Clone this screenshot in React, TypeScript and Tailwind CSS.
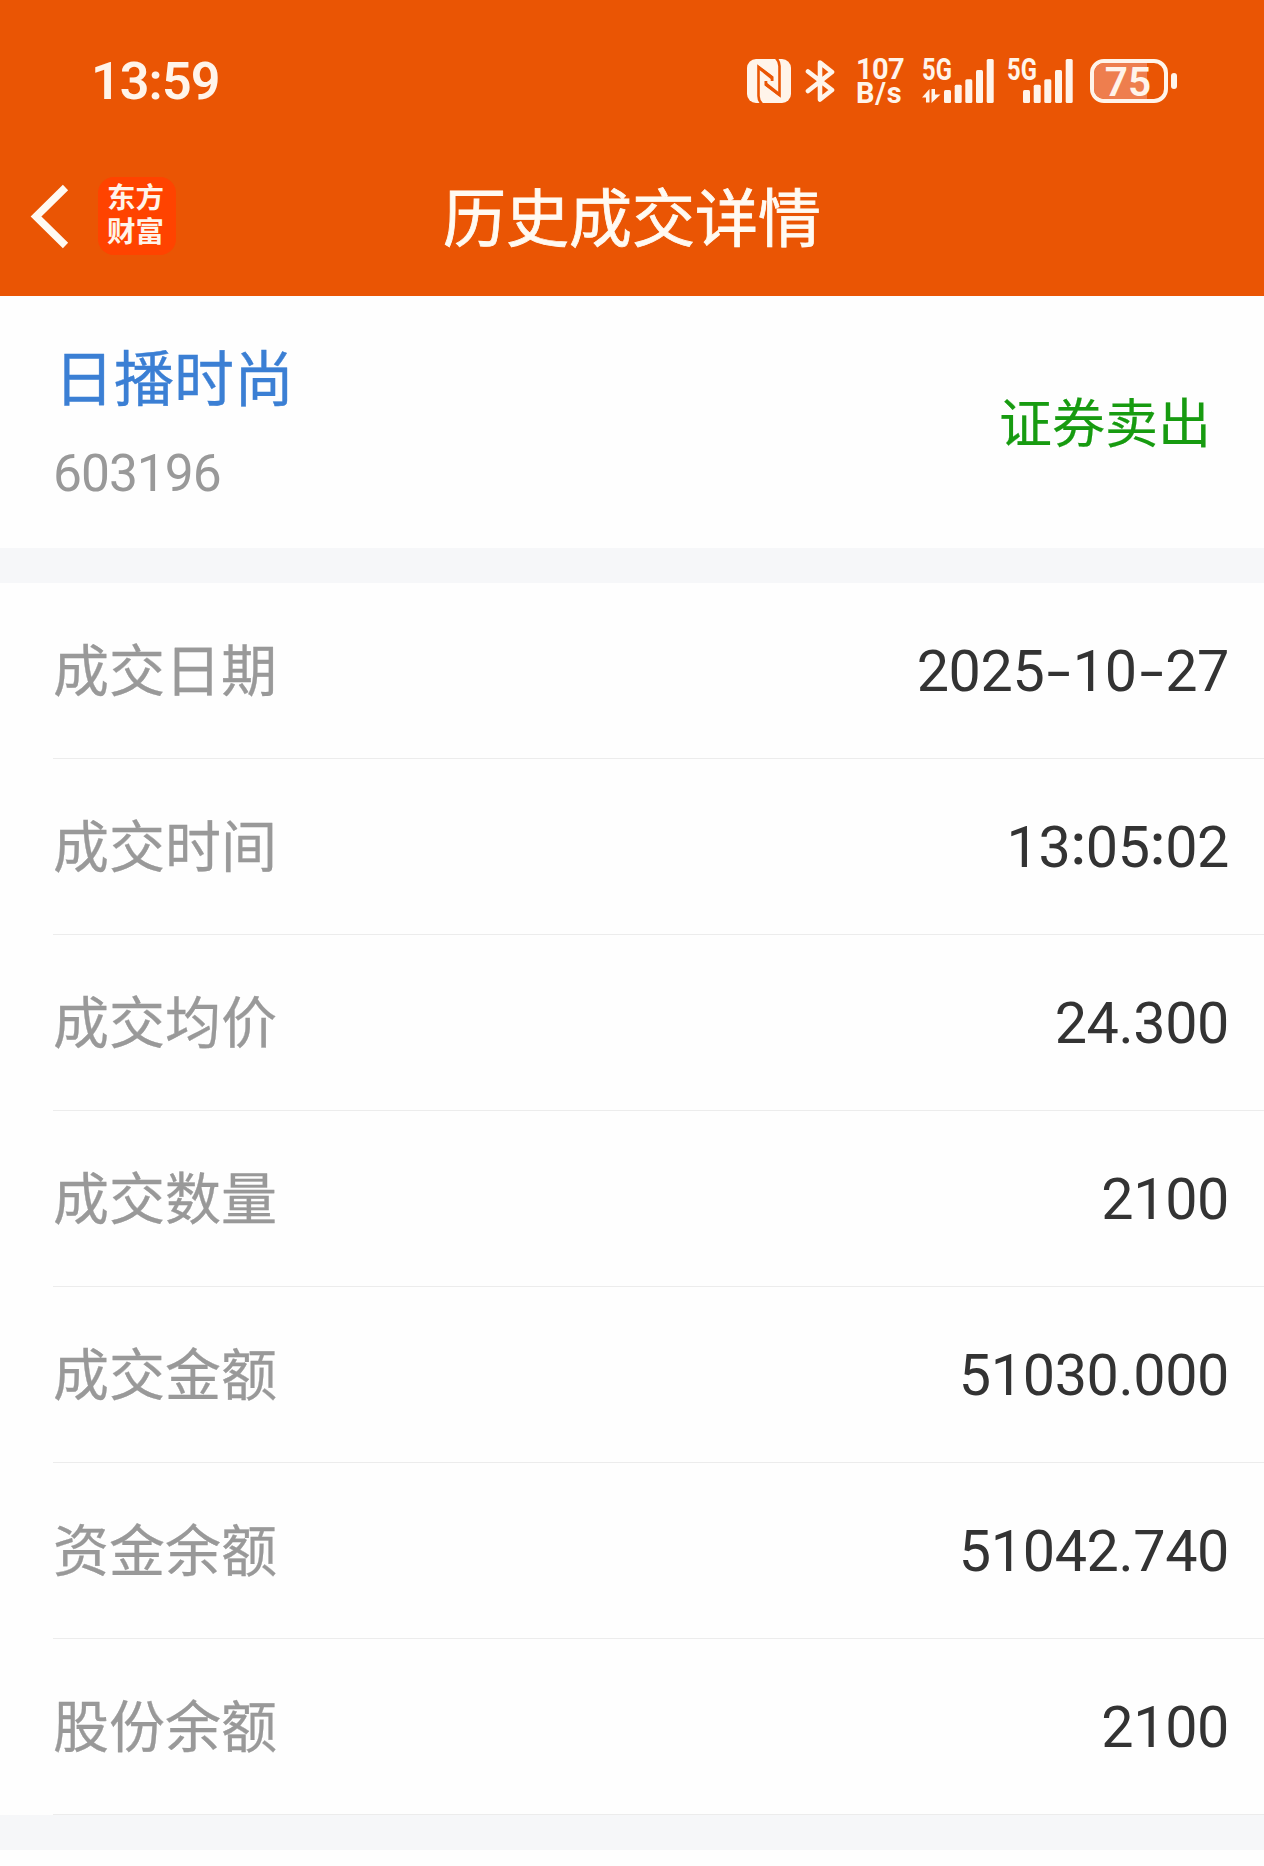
const rows = [
  { label: "成交日期", value: "2025-10-27" },
  { label: "成交时间", value: "13:05:02" },
  { label: "成交均价", value: "24.300" },
  { label: "成交数量", value: "2100" },
  { label: "成交金额", value: "51030.000" },
  { label: "资金余额", value: "51042.740" },
  { label: "股份余额", value: "2100" },
];

function NfcIcon() {
  return (
    <svg className="w-[44px] h-[44px] shrink-0" viewBox="0 0 44 44">
      <rect width="44" height="44" rx="9" fill="#fff4ea" />
      <g fill="none" stroke="#ea5504" strokeWidth="2.600">
        <path d="M15 45C12.500 42.500 11.500 40.500 11.500 37V8L25 18.500V22" />
        <path d="M29 -1C31.500 1.500 32.500 3.500 32.500 7V36L19 25.500V22" />
      </g>
      <path d="M11.500 6.500 26.300 17.500V22L12.500 11Z" fill="#ea5504" />
      <path d="M32.500 37.500 17.700 26.500V22L31.500 33Z" fill="#ea5504" />
    </svg>
  );
}

function BluetoothIcon() {
  return (
    <svg className="w-[32px] h-[44px] shrink-0" viewBox="0 0 32 44">
      <path
        d="M3 12.500 27 31 15 40.500V3.500L27 13 3 32"
        fill="none"
        stroke="#fff4ea"
        strokeWidth="4.600"
        strokeLinecap="round"
        strokeLinejoin="round"
      />
    </svg>
  );
}

function SignalBars() {
  return (
    <svg className="w-[50px] h-[44px]" viewBox="0 0 50 44" fill="#fff4ea">
      <rect x="0" y="31" width="7" height="13" rx="1.500" />
      <rect x="10.700" y="25.700" width="7" height="18.300" rx="1.500" />
      <rect x="21.300" y="20.300" width="7" height="23.700" rx="1.500" />
      <rect x="32" y="11" width="7" height="33" rx="1.500" />
      <rect x="42.700" y="0" width="7" height="44" rx="1.500" />
    </svg>
  );
}

function Signal({ transfer = false }: { transfer?: boolean }) {
  return (
    <div
      className={
        transfer
          ? "relative flex w-[72px] h-[44px] justify-end shrink-0"
          : "relative flex w-[66px] h-[44px] justify-end shrink-0"
      }
    >
      <span className="absolute left-0 -top-px origin-left scale-x-[.78] text-[30.5px] leading-[24px] font-bold">
        5G
      </span>
      {transfer && (
        <svg
          className="absolute left-0 bottom-0 w-[19px] h-[14px]"
          viewBox="0 0 19 14"
          fill="#fff4ea"
        >
          <path d="M7.500 0V13.500H4V8.500H0Z" />
          <path d="M9.500 0H13V5.500H18.500L9.500 14Z" />
        </svg>
      )}
      <SignalBars />
    </div>
  );
}

function Battery() {
  return (
    <div className="flex items-center gap-[3px] shrink-0">
      <div className="relative flex w-[78px] h-[44px] items-center justify-center rounded-[14px] border-4 border-[#fff4ea]">
        <div className="absolute left-0 inset-y-0 w-[53px] rounded-l-[10px] bg-[#ee7e4e]" />
        <span className="relative top-px -left-px text-[40.5px] leading-none font-semibold">75</span>
      </div>
      <div className="w-[6px] h-[16px] rounded-[3px] bg-[#fff4ea]" />
    </div>
  );
}

function StatusBar() {
  return (
    <div className="flex h-[136px] items-center justify-between pt-[26px] pl-[91px] pr-[87px]">
      <span className="pt-[2px] text-[52px] leading-none tracking-[-0.9px] font-semibold">
        13:59
      </span>
      <div className="flex items-center">
        <NfcIcon />
        <div className="ml-[14px]">
          <BluetoothIcon />
        </div>
        <div className="ml-[19px] w-[48px] text-[29px] leading-[24px] font-bold">
          <div className="tracking-[-0.6px]">107</div>
          <div className="tracking-[0.7px]">B/s</div>
        </div>
        <div className="ml-[18px]">
          <Signal transfer />
        </div>
        <div className="ml-[13px]">
          <Signal />
        </div>
        <div className="ml-[17px]">
          <Battery />
        </div>
      </div>
    </div>
  );
}

function TitleBar() {
  return (
    <div className="grid grid-cols-[1fr_auto_1fr] h-[159px] items-center">
      <div className="flex items-center pl-[30px]">
        <svg className="w-[40px] h-[66px]" viewBox="0 0 40 66">
          <path
            d="M35.500 4.500 6 33.500 35.500 62.500"
            fill="none"
            stroke="#fffaf2"
            strokeWidth="7.500"
          />
        </svg>
        <div className="ml-[28px] flex flex-col items-center justify-center w-[78px] h-[78px] pr-[3px] rounded-[16px] bg-[#ff4300] text-[28.5px] leading-[34px] font-bold">
          <span>东方</span>
          <span>财富</span>
        </div>
      </div>
      <h1 className="pt-[7px] text-[63px] leading-none text-[#fffaf2] [-webkit-text-stroke:0.8px_#fffaf2]">
        历史成交详情
      </h1>
    </div>
  );
}

// Dashes and colons sit in wider cells than the font gives them
function Value({ text }: { text: string }) {
  return (
    <span className="flex pt-[3px] text-[57.5px] leading-none tracking-[-0.4px] text-[#333]">
      {text.split("").map((ch, i) => {
        if (ch === "-")
          return (
            <span key={i} className="w-[28.5px] text-center scale-x-[1.5]">
              -
            </span>
          );
        if (ch === ":")
          return (
            <span key={i} className="relative -top-[3px] w-[15.5px] text-center font-medium">
              :
            </span>
          );
        return <span key={i}>{ch}</span>;
      })}
    </span>
  );
}

export default function App() {
  return (
    <div className="w-[1264px] h-[1866px] overflow-hidden bg-[#fefefe] font-['Roboto','Noto_Sans_CJK_SC',sans-serif]">
      <header className="h-[295.5px] bg-[#ea5504] text-[#fff4ea]">
        <StatusBar />
        <TitleBar />
      </header>

      <section className="flex h-[252.5px] items-center justify-between pt-[7px] pl-[53px] pr-[53px]">
        <div>
          <div className="pl-px text-[60px] leading-[70px] text-[#3b7fd4] [-webkit-text-stroke:0.4px_#3b7fd4]">
            日播时尚
          </div>
          <div className="mt-[28px] text-[51.5px] leading-[60px] tracking-[-1px] text-[#999]">
            603196
          </div>
        </div>
        <div className="text-[53px] leading-none text-[#179b10] [-webkit-text-stroke:0.2px_#179b10]">
          证券卖出
        </div>
      </section>

      <div className="h-[35px] bg-[#f6f7f9]" />

      <section>
        {rows.map((row) => (
          <div key={row.label} className="h-[176px] pl-[53px]">
            <div className="flex h-full items-center justify-between border-b-[1px] border-[#ececec] pr-[35px]">
              <span className="pt-[3px] text-[56px] leading-none text-[#999] [-webkit-text-stroke:0.3px_#999]">
                {row.label}
              </span>
              <Value text={row.value} />
            </div>
          </div>
        ))}
      </section>

      <div className="h-[35px] bg-[#f6f7f9]" />
    </div>
  );
}
